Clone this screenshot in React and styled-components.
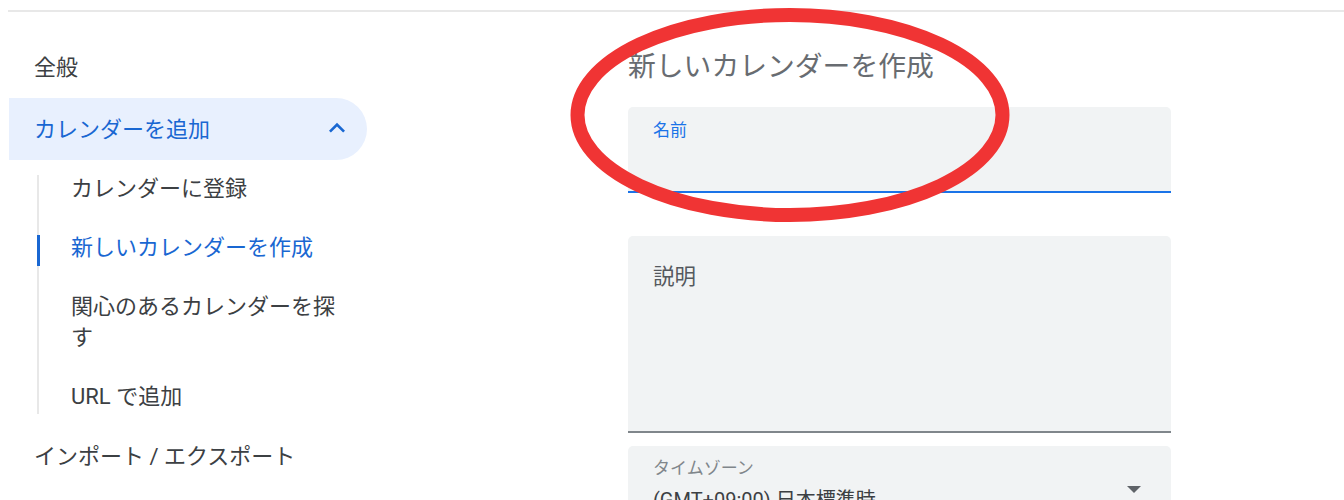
import React from "react";
import styled, { createGlobalStyle } from "styled-components";

const GlobalStyle = createGlobalStyle`
  html, body { margin: 0; padding: 0; background: #ffffff; }
  body {
    font-family: Roboto, "Noto Sans CJK JP", "Noto Sans", sans-serif;
    color: #3c4043;
    overflow: hidden;
  }
`;

const Page = styled.div`
  width: 1344px;
  height: 500px;
  padding-top: 10px;
  box-sizing: border-box;
  overflow: hidden;
`;

const TopRule = styled.div`
  margin-left: 8px;
  border-top: 2px solid #e8e8e8;
`;

const Body = styled.div`
  display: flex;
  padding-left: 9px;
  gap: 261px;
`;

const Sidebar = styled.nav`
  width: 358px;
  padding-top: 24px;
  display: flex;
  flex-direction: column;
`;

const NavItem = styled.div`
  box-sizing: border-box;
  height: 62px;
  display: flex;
  align-items: center;
  justify-content: space-between;
  padding: 0 20px 5px 25px;
  font-size: 22px;
  color: ${(p) => (p.$active ? "#1967d2" : "#3c4043")};
  background: ${(p) => (p.$active ? "#e8f0fe" : "transparent")};
  border-radius: 0 31px 31px 0;
`;

const Chevron = styled.svg`
  width: 32px;
  height: 32px;
  fill: #1967d2;
  margin-right: -6px;
  margin-top: 2px;
`;

const SubList = styled.div`
  position: relative;
  display: flex;
  flex-direction: column;
  gap: 2px;
  margin: 0 0 0 28px;
  &::before {
    content: "";
    position: absolute;
    left: 0;
    top: 15px;
    bottom: 11px;
    width: 2px;
    background: #e8e8e8;
  }
`;

const SubItem = styled.div`
  position: relative;
  padding: 13px 22px 13px 34px;
  font-size: 22px;
  line-height: 31px;
  color: ${(p) => (p.$active ? "#1967d2" : "#3c4043")};
  &::before {
    content: "";
    display: ${(p) => (p.$active ? "block" : "none")};
    position: absolute;
    left: 0;
    top: 50%;
    width: 3px;
    height: 31px;
    margin-top: -13px;
    background: #1967d2;
  }
`;

const Main = styled.main`
  position: relative;
  width: 543px;
  padding-top: 35px;
  display: flex;
  flex-direction: column;
`;

const Title = styled.h1`
  margin: 0 0 20px;
  font-size: 27.8px;
  line-height: 40px;
  font-weight: 400;
  color: #686c71;
`;

const Field = styled.div`
  position: relative;
  box-sizing: border-box;
  height: ${(p) => p.$h}px;
  margin-bottom: ${(p) => p.$mb || 0}px;
  background: #f1f3f4;
  border-radius: 5px 5px 0 0;
  border-bottom: ${(p) => p.$border || "none"};
  padding: ${(p) => p.$pad || "12px 25px 0"};
`;

const FieldLabel = styled.div`
  font-size: ${(p) => p.$size || 17}px;
  line-height: ${(p) => p.$lh || 24}px;
  color: ${(p) => p.$color || "#80868b"};
`;

const FieldValue = styled.div`
  margin-top: 5px;
  font-size: 20px;
  line-height: 30px;
  color: #3c4043;
`;

const DropArrow = styled.div`
  position: absolute;
  right: 30px;
  top: 40px;
  width: 0;
  height: 0;
  border-left: 7px solid transparent;
  border-right: 7px solid transparent;
  border-top: 7px solid #5f6368;
`;

const Annotation = styled.svg`
  position: absolute;
  left: -58px;
  top: -4px;
  width: 440px;
  height: 216px;
  pointer-events: none;
  overflow: visible;
`;

export default function App() {
  return (
    <>
      <GlobalStyle />
      <Page>
        <TopRule />
        <Body>
          <Sidebar>
            <NavItem>全般</NavItem>
            <NavItem $active>
              カレンダーを追加
              <Chevron viewBox="0 0 24 24">
                <path d="M7.41 15.41L12 10.83l4.59 4.58L18 14l-6-6-6 6z" />
              </Chevron>
            </NavItem>
            <SubList>
              <SubItem>カレンダーに登録</SubItem>
              <SubItem $active>新しいカレンダーを作成</SubItem>
              <SubItem>関心のあるカレンダーを探す</SubItem>
              <SubItem>URL で追加</SubItem>
            </SubList>
            <NavItem>インポート / エクスポート</NavItem>
          </Sidebar>
          <Main>
            <Title>新しいカレンダーを作成</Title>
            <Field $h={86} $mb={43} $border="2px solid #1a73e8" $pad="11px 25px 0">
              <FieldLabel $color="#1a73e8">名前</FieldLabel>
            </Field>
            <Field $h={197} $mb={13} $border="2px solid #80868b" $pad="26px 25px 0">
              <FieldLabel $size={21.5} $lh={30} $color="#55595e">説明</FieldLabel>
            </Field>
            <Field $h={110} $pad="10px 25px 0">
              <FieldLabel>タイムゾーン</FieldLabel>
              <FieldValue>(GMT+09:00) 日本標準時</FieldValue>
              <DropArrow />
            </Field>
            <Annotation viewBox="0 0 440 216">
              <ellipse cx="220" cy="107" rx="212.5" ry="100" fill="none" stroke="#f03434" strokeWidth="14" />
            </Annotation>
          </Main>
        </Body>
      </Page>
    </>
  );
}
